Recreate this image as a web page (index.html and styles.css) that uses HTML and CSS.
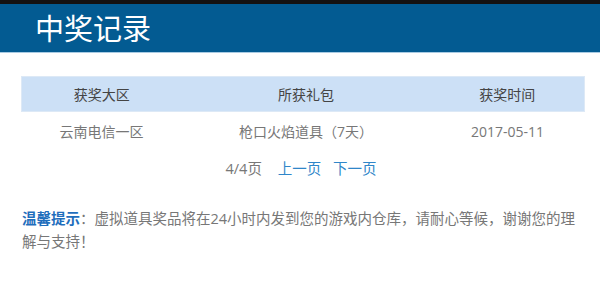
FILE: index.html
```html
<!DOCTYPE html>
<html lang="zh-CN">
<head>
    <meta charset="UTF-8">
    <meta name="viewport" content="width=device-width, initial-scale=1.0">
    <title>中奖记录</title>
    <link rel="stylesheet" href="styles.css">
</head>
<body>
    <div class="topbar"></div>
    <div class="header">
        <h1>中奖记录</h1>
    </div>
    <div class="content">
        <table class="record-table">
            <thead>
                <tr>
                    <th class="col-area">获奖大区</th>
                    <th class="col-gift">所获礼包</th>
                    <th class="col-time">获奖时间</th>
                </tr>
            </thead>
            <tbody>
                <tr>
                    <td>云南电信一区</td>
                    <td>枪口火焰道具（7天）</td>
                    <td>2017-05-11</td>
                </tr>
            </tbody>
        </table>

        <div class="pager">
            <span class="pager-count">4/4页</span>
            <a href="#" class="pager-link">上一页</a>
            <a href="#" class="pager-link">下一页</a>
        </div>

        <p class="tip"><span class="tip-label">温馨提示</span>：虚拟道具奖品将在24小时内发到您的游戏内仓库，请耐心等候，谢谢您的理解与支持！</p>
    </div>
</body>
</html>
```

FILE: styles.css
```css
* {
    box-sizing: border-box;
}

body {
    margin: 0;
    font-family: "Open Sans", "Noto Sans CJK SC", sans-serif;
    color: #666;
    background: #fff;
    text-spacing-trim: space-all;
}

.topbar {
    height: 4px;
    background-color: #141212;
}

.header {
    height: 49px;
    background-color: #035b92;
    border-bottom: 1px solid #a9cbe3;
    padding-left: 35px;
}

.header h1 {
    margin: 0;
    font-size: 29px;
    font-weight: normal;
    line-height: 50px;
    color: #fff;
}

.content {
    padding: 23px 15px 0 21px;
}

.record-table {
    width: 564px;
    border-collapse: collapse;
    font-size: 14px;
}

.record-table thead tr {
    border: 1px solid #dde9f6;
}

.record-table th {
    height: 35px;
    background-color: #cce0f6;
    padding: 0;
    font-weight: normal;
    color: #444;
}

.record-table td {
    height: 39px;
    padding: 0;
    text-align: center;
    color: #777;
}

.col-area {
    width: 160px;
}

.col-time {
    width: 154px;
}

.pager {
    text-align: center;
    font-size: 14.5px;
    line-height: 34px;
    padding-top: 1px;
}

.pager-count {
    color: #777;
    margin-right: 8px;
}

.pager-link {
    color: #2f86c9;
    text-decoration: none;
    margin: 0 4px;
}

.tip {
    margin: 21px 0 0 1px;
    font-size: 14.5px;
    line-height: 23px;
    color: #777;
}

.tip-label {
    color: #1f6ebc;
    font-weight: bold;
}
```
